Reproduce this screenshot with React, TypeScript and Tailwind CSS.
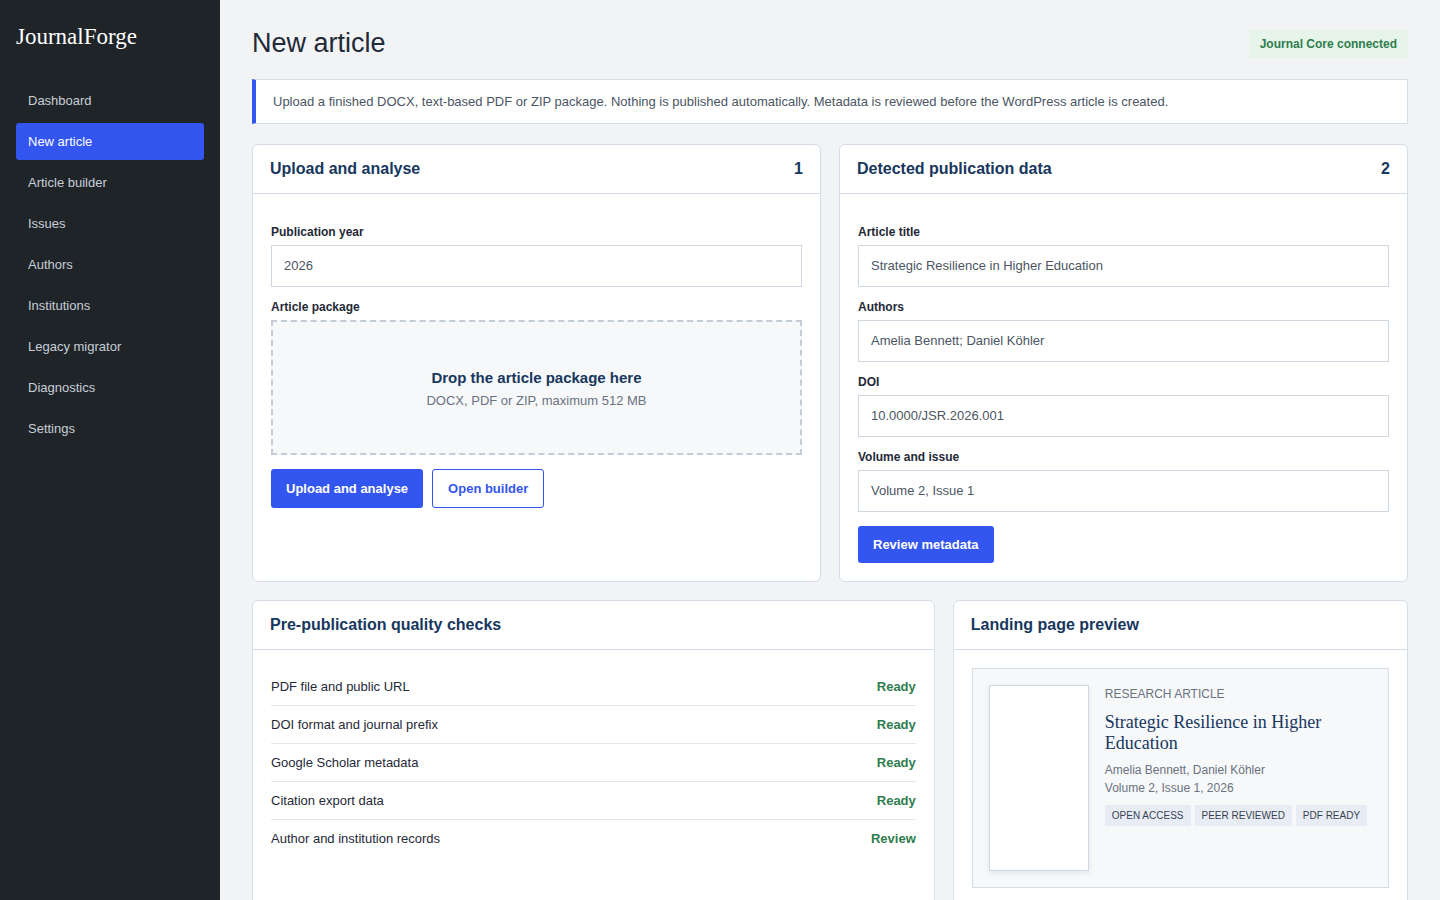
const nav = [
  "Dashboard",
  "New article",
  "Article builder",
  "Issues",
  "Authors",
  "Institutions",
  "Legacy migrator",
  "Diagnostics",
  "Settings",
];

const checks = [
  { label: "PDF file and public URL", status: "Ready" },
  { label: "DOI format and journal prefix", status: "Ready" },
  { label: "Google Scholar metadata", status: "Ready" },
  { label: "Citation export data", status: "Ready" },
  { label: "Author and institution records", status: "Review" },
];

const metaFields = [
  { label: "Article title", value: "Strategic Resilience in Higher Education" },
  { label: "Authors", value: "Amelia Bennett; Daniel Köhler" },
  { label: "DOI", value: "10.0000/JSR.2026.001" },
  { label: "Volume and issue", value: "Volume 2, Issue 1" },
];

function Field({ label, value }: { label: string; value: string }) {
  return (
    <div className="mb-[13px]">
      <div className="text-[12px] font-bold text-[#1f2937] leading-[15px] mb-[5px]">{label}</div>
      <div className="h-[42px] border border-[#cfd7e1] bg-white px-3 flex items-center text-[13px] text-[#4b5563]">
        {value}
      </div>
    </div>
  );
}

function Card({
  title,
  step,
  children,
  className = "",
}: {
  title: string;
  step?: string;
  children: React.ReactNode;
  className?: string;
}) {
  return (
    <section className={"bg-white border border-[#d5dde6] rounded-[6px] flex flex-col " + className}>
      <header className="h-[49px] border-b border-[#d5dde6] px-[17px] flex items-center justify-between">
        <h2 className="text-[16px] font-bold text-[#17375e]">{title}</h2>
        {step && <span className="text-[16px] font-bold text-[#17375e]">{step}</span>}
      </header>
      {children}
    </section>
  );
}

export default function App() {
  return (
    <div className="flex min-h-[900px] bg-[#f1f3f5] font-['Liberation_Sans',Arial,sans-serif]">
      {/* Sidebar */}
      <aside className="w-[220px] shrink-0 bg-[#1f2429] px-4">
        <div className="pt-[23px] pb-[31px] text-[23px] leading-[28px] text-white font-['Liberation_Serif',serif]">
          JournalForge
        </div>
        <nav className="flex flex-col gap-1">
          {nav.map((item) => (
            <a
              key={item}
              className={
                "h-[37px] flex items-center px-3 rounded-[3px] text-[13px] " +
                (item === "New article" ? "bg-[#3355f0] text-white" : "text-[#c8ced6]")
              }
            >
              {item}
            </a>
          ))}
        </nav>
      </aside>

      {/* Main */}
      <main className="flex-1 px-8 pt-[27px]">
        <div className="flex items-start justify-between">
          <h1 className="text-[27px] leading-[32px] text-[#1f2937]">New article</h1>
          <span className="mt-[3px] bg-[#e6f4ea] text-[#2f7d4f] text-[12px] font-bold px-[11px] h-[28px] flex items-center rounded-[3px]">
            Journal Core connected
          </span>
        </div>

        <div className="mt-[20px] h-[45px] bg-white border border-[#d5dde6] border-l-4 border-l-[#3355f0] flex items-center pl-[17px] text-[13px] text-[#4b5563]">
          Upload a finished DOCX, text-based PDF or ZIP package. Nothing is published automatically. Metadata is reviewed before the WordPress article is created.
        </div>

        <div className="mt-5 grid grid-cols-2 gap-[18px]">
          <Card title="Upload and analyse" step="1" className="h-[438px]">
            <div className="px-[18px] pt-[31px]">
              <Field label="Publication year" value="2026" />
              <div className="text-[12px] font-bold text-[#1f2937] leading-[15px] mb-[5px]">Article package</div>
              <div className="h-[135px] border-2 border-dashed border-[#c3ccd7] bg-[#f6f8fa] pt-[2px] flex flex-col items-center justify-center">
                <div className="text-[15px] font-bold text-[#17375e]">Drop the article package here</div>
                <div className="text-[13px] text-[#6b7280] mt-[1px]">DOCX, PDF or ZIP, maximum 512 MB</div>
              </div>
              <div className="mt-[14px] flex gap-[9px]">
                <button className="h-[39px] px-[15px] bg-[#3355f0] text-white text-[13px] font-bold rounded-[3px]">
                  Upload and analyse
                </button>
                <button className="h-[39px] px-[15px] bg-white border border-[#3355f0] text-[#3355f0] text-[13px] font-bold rounded-[3px]">
                  Open builder
                </button>
              </div>
            </div>
          </Card>

          <Card title="Detected publication data" step="2" className="h-[438px]">
            <div className="px-[18px] pt-[31px]">
              {metaFields.map((f) => (
                <Field key={f.label} label={f.label} value={f.value} />
              ))}
              <button className="mt-[1px] h-[37px] px-[15px] bg-[#3355f0] text-white text-[13px] font-bold rounded-[3px]">
                Review metadata
              </button>
            </div>
          </Card>
        </div>

        <div className="mt-[18px] grid grid-cols-[1.5fr_1fr] gap-[18px]">
          <Card title="Pre-publication quality checks" className="h-[320px]">
            <div className="px-[18px] pt-[18px]">
              {checks.map((c, i) => (
                <div
                  key={c.label}
                  className={
                    "h-[38px] flex items-center justify-between text-[13px] " +
                    (i < checks.length - 1 ? "border-b border-[#e3e7ec]" : "")
                  }
                >
                  <span className="text-[#1f2937]">{c.label}</span>
                  <span className="font-bold text-[#2f7d4f]">{c.status}</span>
                </div>
              ))}
            </div>
          </Card>

          <Card title="Landing page preview" className="h-[320px]">
            <div className="px-[18px] pt-[18px]">
              <div className="h-[220px] bg-[#f6f8fa] border border-[#d5dde6] p-4 flex gap-4">
                <div className="w-[100px] h-[186px] shrink-0 bg-white border border-[#cfd7e1] shadow-[0_2px_6px_rgba(15,23,42,0.08)]" />
                <div className="min-w-0 pt-[1px]">
                  <div className="text-[12px] leading-[16px] text-[#6b7280] uppercase">Research article</div>
                  <div className="mt-[10px] text-[18px] leading-[21px] text-[#17375e] font-['Liberation_Serif',serif]">
                    Strategic Resilience in Higher Education
                  </div>
                  <div className="mt-[7px] text-[12px] leading-[18px] text-[#6b7280]">
                    Amelia Bennett, Daniel Köhler
                    <br />
                    Volume 2, Issue 1, 2026
                  </div>
                  <div className="mt-[8px] flex gap-1">
                    {["OPEN ACCESS", "PEER REVIEWED", "PDF READY"].map((t) => (
                      <span
                        key={t}
                        className="h-[21px] px-[7px] flex items-center whitespace-nowrap bg-[#e8edf5] text-[10px] text-[#374151]"
                      >
                        {t}
                      </span>
                    ))}
                  </div>
                </div>
              </div>
            </div>
          </Card>
        </div>
      </main>
    </div>
  );
}
